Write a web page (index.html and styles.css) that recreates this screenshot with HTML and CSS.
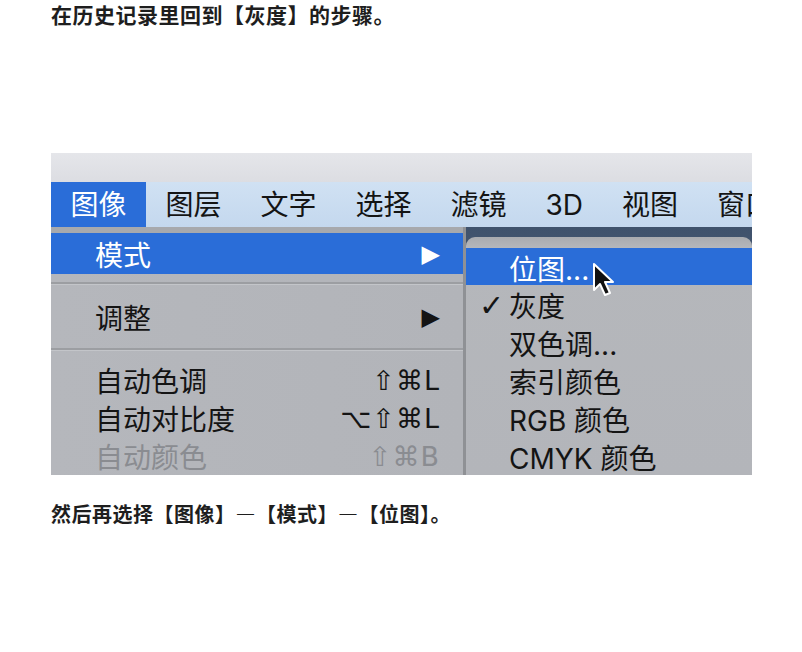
FILE: index.html
```html
<!DOCTYPE html>
<html lang="zh-CN">
<head>
    <meta charset="utf-8">
    <title>位图模式</title>
    <link rel="stylesheet" href="styles.css">
</head>
<body>
<div class="article">
    <p class="step first">在历史记录里回到【灰度】的步骤。</p>

    <div class="shot">
        <div class="titlebar"></div>
        <div class="menubar">
            <span class="active">图像</span>
            <span>图层</span>
            <span>文字</span>
            <span>选择</span>
            <span>滤镜</span>
            <span>3D</span>
            <span>视图</span>
            <span>窗口</span>
        </div>
        <div class="dropdowns">
            <div class="menu-panel">
                <div class="item mode selected">模式 <span class="arrow">▶</span></div>
                <div class="sep"></div>
                <div class="item adjust">调整 <span class="arrow">▶</span></div>
                <div class="sep"></div>
                <div class="auto-items">
                    <div class="item">自动色调 <span class="keys">⇧⌘L</span></div>
                    <div class="item">自动对比度 <span class="keys">⌥⇧⌘L</span></div>
                    <div class="item disabled">自动颜色 <span class="keys">⇧⌘B</span></div>
                </div>
            </div>
            <div class="submenu">
                <div class="submenu-box">
                    <div class="sub-item selected"><span class="check"></span>位图...</div>
                    <div class="sub-item"><span class="check">✓</span>灰度</div>
                    <div class="sub-item"><span class="check"></span>双色调...</div>
                    <div class="sub-item"><span class="check"></span>索引颜色</div>
                    <div class="sub-item"><span class="check"></span>RGB 颜色</div>
                    <div class="sub-item"><span class="check"></span>CMYK 颜色</div>
                </div>
            </div>
        </div>
        <svg class="cursor" width="26" height="38" viewBox="0 0 26 38">
            <path d="M2 2 L2 28 L8 22 L13 33 L18 31 L13 20 L21 20 Z" fill="#111" stroke="#fff" stroke-width="2" stroke-linejoin="round"/>
        </svg>
    </div>

    <p class="step">然后再选择【图像】—【模式】—【位图】。</p>
</div>
</body>
</html>
```

FILE: styles.css
```css
body {
    margin: 0;
    background: #fff;
    font-family: "Noto Sans CJK SC", sans-serif;
    color: #1e1e1e;
}
.article {
    padding: 0 50px 0 51px;
}
.step {
    margin: 0;
    font-size: 20px;
    font-weight: bold;
    line-height: 28px;
    letter-spacing: 0.5px;
}
.step.first {
    font-size: 21px;
}
.shot {
    position: relative;
    width: 701px;
    height: 322px;
    margin: 125px 0 25px;
    overflow: hidden;
    font-family: Inter, "Noto Sans CJK SC", sans-serif;
    font-size: 28px;
    color: #141414;
}
.titlebar {
    height: 29px;
    background: linear-gradient(#e5e6ea, #dcdde2);
}
.menubar {
    display: flex;
    height: 45px;
    background: linear-gradient(#d0e1f3, #c4d8ee);
    white-space: nowrap;
}
.menubar span {
    padding: 2px 19.5px 0;
    line-height: 43px;
}
.menubar .active {
    background: #2a6dd8;
    color: #fff;
}
.dropdowns {
    display: flex;
    height: 248px;
}
.menu-panel {
    width: 412px;
    padding-top: 6px;
    background: linear-gradient(90deg, #b5b7bc, #b2b4b9);
    box-shadow: inset 0 6px 0 #a7a9ad;
}
.item {
    display: flex;
    justify-content: space-between;
    align-items: center;
    padding: 0 23px 0 44px;
    height: 38px;
}
.item.mode {
    height: 41px;
    margin-bottom: 8px;
}
.item.adjust {
    height: 63px;
}
.item.selected {
    background: #2a6dd8;
    color: #fff;
}
.item.disabled {
    color: #8a8c91;
}
.arrow {
    font-family: "DejaVu Sans", sans-serif;
    font-size: 24px;
}
.keys {
    font-family: "DejaVu Sans", sans-serif;
    font-size: 27px;
    letter-spacing: 1px;
}
.sep {
    height: 3px;
    background: linear-gradient(#9c9ea2, #9c9ea2 2px, #c3c5c9 2px);
}
.auto-items {
    padding-top: 10px;
}
.submenu {
    flex: 1;
    padding-top: 10px;
    background: linear-gradient(#3f526c, #6a7688);
    border-left: 3px solid #8f9195;
}
.submenu-box {
    height: 238px;
    padding-top: 11px;
    box-sizing: border-box;
    background: linear-gradient(#a9abaf, #b5b7bb 11px, #b3b5ba);
    border-radius: 9px 9px 0 0;
}
.sub-item {
    display: grid;
    grid-template-columns: 43px auto;
    align-items: center;
    height: 38px;
    white-space: nowrap;
}
.sub-item.selected {
    height: 37px;
    background: #2a6dd8;
    color: #fff;
}
.check {
    padding-left: 8px;
    text-align: center;
    font-family: "DejaVu Sans", sans-serif;
    font-weight: bold;
    font-size: 30px;
}
.cursor {
    position: absolute;
    left: 541px;
    top: 109px;
}
```
